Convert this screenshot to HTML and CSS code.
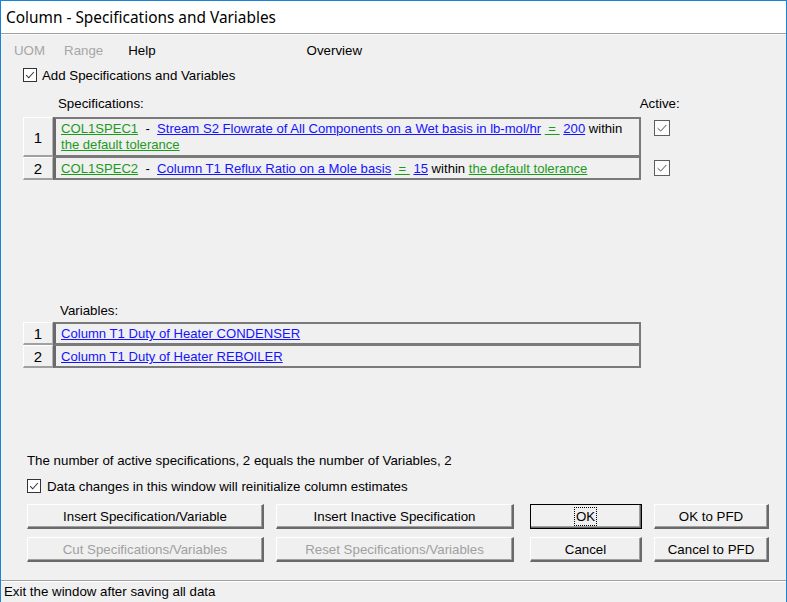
FILE: index.html
```html
<!DOCTYPE html>
<html>
<head>
<meta charset="utf-8">
<link rel="stylesheet" href="styles.css">
</head>
<body>
<div class="window">
  <div class="titlebar">Column - Specifications and Variables</div>
  <div class="menu">
    <span class="mi dis m-uom">UOM</span>
    <span class="mi dis m-range">Range</span>
    <span class="mi m-help">Help</span>
    <span class="mi m-over">Overview</span>
  </div>
  <div class="main">
    <label class="chk-line top-chk"><span class="cb"><svg viewBox="0 0 14 14"><path d="M2.5 7.2 L5.5 10.2 L11.5 3.5" fill="none" stroke="#333" stroke-width="1.2"/></svg></span>Add Specifications and Variables</label>

    <div class="head-row">
      <span class="h-spec">Specifications:</span>
      <span class="h-active">Active:</span>
    </div>
    <div class="grid-rows specs">
      <div class="row">
        <div class="num tall">1</div>
        <div class="cell tall"><a class="g">COL1SPEC1</a>&nbsp; - &nbsp;<a class="b">Stream S2 Flowrate of All Components on a Wet basis in lb-mol/hr</a> <a class="g">&nbsp;=&nbsp;</a> <a class="b">200</a> within<br><a class="g">the default tolerance</a></div>
        <div class="act"><span class="cb gray"><svg viewBox="0 0 16 16"><path d="M3 8.2 L6.5 11.5 L13 4.5" fill="none" stroke="#444" stroke-width="1.1"/></svg></span></div>
      </div>
      <div class="row">
        <div class="num">2</div>
        <div class="cell"><a class="g">COL1SPEC2</a>&nbsp; - &nbsp;<a class="b">Column T1 Reflux Ratio on a Mole basis</a> <a class="g">&nbsp;=&nbsp;</a> <a class="b">15</a> within <a class="g">the default tolerance</a></div>
        <div class="act"><span class="cb gray"><svg viewBox="0 0 16 16"><path d="M3 8.2 L6.5 11.5 L13 4.5" fill="none" stroke="#444" stroke-width="1.1"/></svg></span></div>
      </div>
    </div>

    <div class="head-row vars-head"><span class="h-var">Variables:</span></div>
    <div class="grid-rows vars">
      <div class="row">
        <div class="num">1</div>
        <div class="cell"><a class="b">Column T1 Duty of Heater CONDENSER</a></div>
      </div>
      <div class="row">
        <div class="num">2</div>
        <div class="cell"><a class="b">Column T1 Duty of Heater REBOILER</a></div>
      </div>
    </div>

    <div class="note">The number of active specifications, 2 equals the number of Variables, 2</div>
    <label class="chk-line bottom-chk"><span class="cb"><svg viewBox="0 0 14 14"><path d="M2.5 7.2 L5.5 10.2 L11.5 3.5" fill="none" stroke="#333" stroke-width="1.2"/></svg></span>Data changes in this window will reinitialize column estimates</label>

    <div class="btns">
      <button class="btn w1">Insert Specification/Variable</button>
      <button class="btn w1">Insert Inactive Specification</button>
      <button class="btn w2 def"><span class="focus">OK</span></button>
      <button class="btn w3">OK to PFD</button>
      <button class="btn w1 dis">Cut Specifications/Variables</button>
      <button class="btn w1 dis">Reset Specifications/Variables</button>
      <button class="btn w2">Cancel</button>
      <button class="btn w3">Cancel to PFD</button>
    </div>
  </div>
  <div class="status">Exit the window after saving all data</div>
</div>
</body>
</html>
```

FILE: styles.css
```css
* { box-sizing: border-box; }
html, body { margin: 0; padding: 0; }
body { width: 787px; height: 602px; overflow: hidden; background: #f0f0f0; }
.window {
  width: 787px; height: 602px;
  border: 1px solid #1883d7; border-bottom: none;
  background: #f0f0f0;
  display: flex; flex-direction: column;
  font-family: "Liberation Sans", Arial, sans-serif;
  font-size: 13.3px; color: #000;
}
.titlebar {
  height: 33px; background: #fff;
  border-bottom: 1px solid #a0a0a0;
  padding: 6px 0 0 5px;
  font-family: "Noto Sans", "Open Sans", sans-serif;
  font-size: 15.4px; color: #000;
}
.menu {
  height: 31px; position: relative;
  display: flex; align-items: center;
  padding-top: 1px;
  border-top: 1px solid #fbfbfb;
}
.mi { display: inline-block; }
.mi.dis { color: #a6a6a6; }
.m-uom { margin-left: 13px; }
.m-range { margin-left: 19px; }
.m-help { margin-left: 25px; }
.m-over { margin-left: 151px; }
.main { flex: 1; display: flex; flex-direction: column; }
.chk-line { display: flex; align-items: center; height: 16px; }
.top-chk { margin-left: 22px; margin-top: 2px; }
.cb {
  width: 14px; height: 14px; border: 1px solid #333; background: #fff;
  display: inline-flex; margin-right: 5px; flex: none;
}
.cb svg { width: 100%; height: 100%; }
.cb.gray { width: 16px; height: 16px; border-color: #5f5f5f; background: #fff; margin: 0; }
.head-row { display: flex; margin-top: 13px; height: 16px; }
.h-spec { margin-left: 57px; }
.h-active { margin-left: 496px; }
.grid-rows { margin-left: 22px; margin-top: 5px; }
.row { display: flex; }
.num {
  width: 30px; height: 23px;
  border-top: 1px solid #fff; border-left: 1px solid #fff;
  border-bottom: 2px solid #a0a0a0;
  border-right: 1px solid #b5b5b5;
  background: #f0f0f0;
  display: flex; align-items: center; justify-content: center;
  font-size: 15px; padding-top: 1px;
}
.num.tall { height: 40px; }
.cell {
  width: 588px; height: 23px;
  border: 2px solid #7a7a7a;
  border-left: 3px solid #6a6a6a;
  border-top-width: 2px;
  padding: 2px 0 0 5px;
  line-height: 16px;
  font-size: 13.1px;
  white-space: nowrap;
}
.row + .row .cell { border-top-width: 1px; padding-top: 3px; }
.cell.tall { height: 40px; }
a { text-decoration: underline; }
a.g { color: #1c9a1c; }
a.b { color: #1414ff; }
.act { width: 42px; display: flex; justify-content: flex-start; padding: 3px 0 0 13px; }
.vars-head { margin-top: 123px; }
.h-var { margin-left: 59px; }
.vars { margin-top: 3px; }
.note { margin-left: 26px; margin-top: 85px; height: 16px; }
.bottom-chk { margin-left: 26px; margin-top: 9px; }
.bottom-chk .cb { margin-right: 6px; }
.btns {
  margin-left: 26px; margin-top: 10px;
  display: grid; grid-template-columns: 237px 238px 112px 115px;
  column-gap: 12px; row-gap: 8px;
}
.btns .w2 { margin-left: 4px; width: 112px; }
.btns .w3 { margin-left: 4px; width: 115px; }
.btn {
  height: 25px; padding: 0;
  font-family: "Liberation Sans", Arial, sans-serif; font-size: 13.3px; color: #000;
  background: #f0f0f0;
  border-top: 1px solid #fff; border-left: 1px solid #fff;
  border-right: 2px solid #696969; border-bottom: 2px solid #696969;
  box-shadow: inset -1px -1px 0 #a0a0a0;
}
.btn.dis { color: #a0a0a0; }
.btn.def { outline: 1px solid #000; outline-offset: -1px; }
.focus { outline: 1px dotted #000; padding: 1px 1px; }
.status {
  height: 22px; border-top: 1px solid #a0a0a0;
  padding: 3px 0 0 3px; background: #f0f0f0;
  box-shadow: inset 0 1px 0 #fff;
  margin-top: 11px;
}
```
